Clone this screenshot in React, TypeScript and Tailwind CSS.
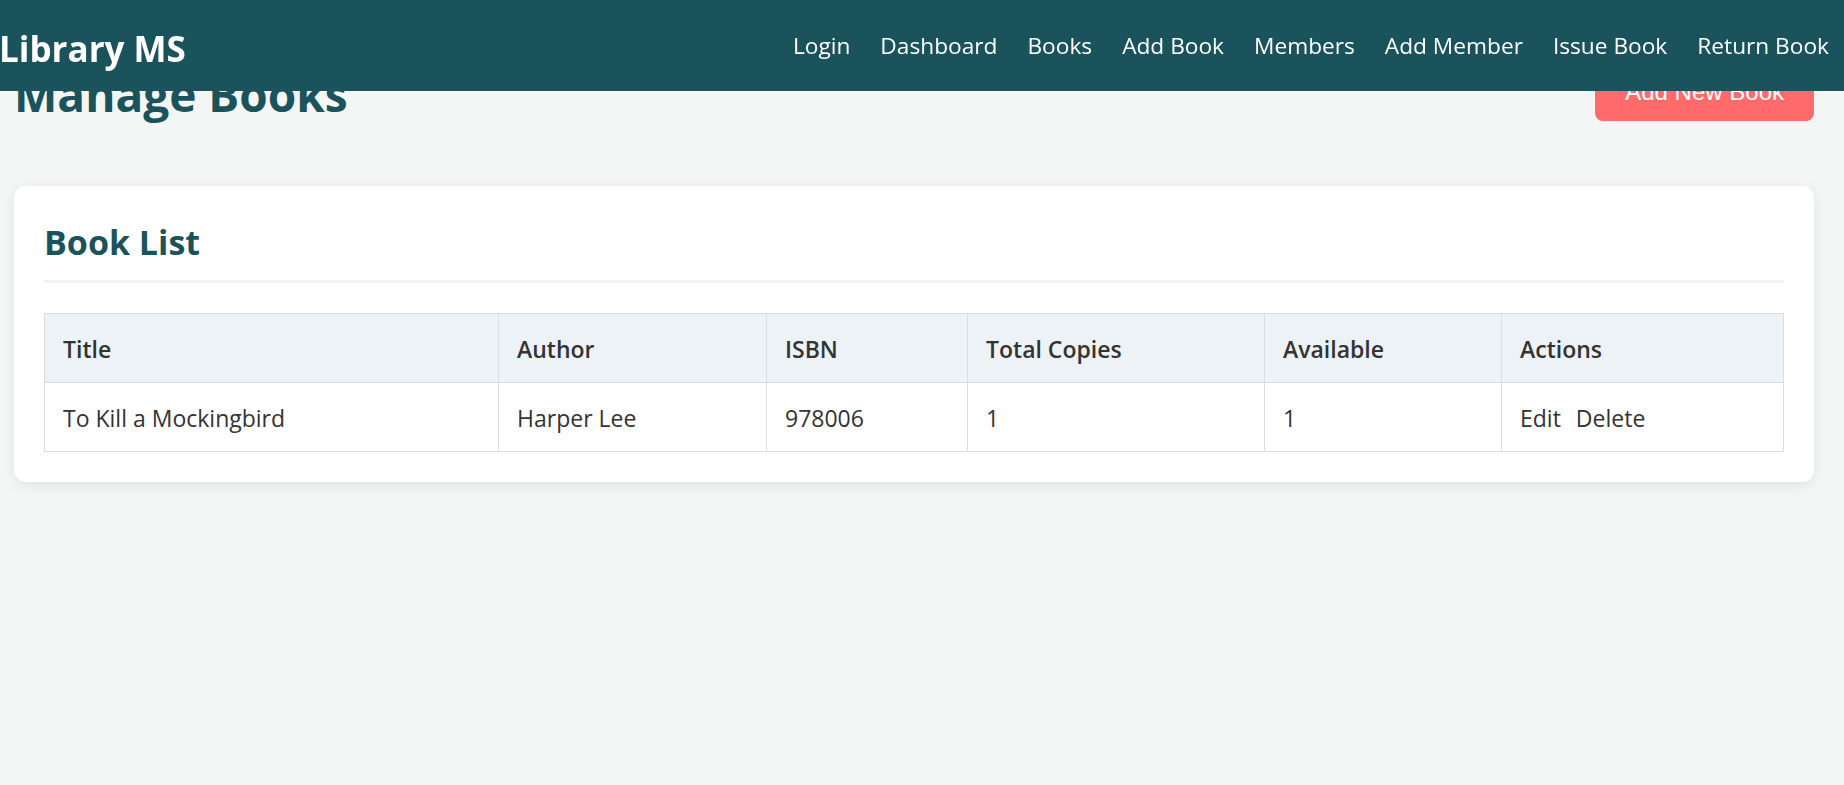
import React from "react";

const links = ["Login", "Dashboard", "Books", "Add Book", "Members", "Add Member", "Issue Book", "Return Book"];

const cols = [
  { name: "Title", w: "w-[454px]" },
  { name: "Author", w: "w-[268px]" },
  { name: "ISBN", w: "w-[201px]" },
  { name: "Total Copies", w: "w-[297px]" },
  { name: "Available", w: "w-[237px]" },
  { name: "Actions", w: "" },
];

export default function App() {
  return (
    <div
      className="min-h-[785px] bg-[#f4f6f6] text-[#333333]"
      style={{ fontFamily: '"Open Sans", "Noto Sans", sans-serif' }}
    >
      <nav className="fixed top-0 left-0 right-0 z-10 h-[91px] bg-[#1a535c] flex items-center justify-between pr-[15px]">
        <div className="text-white font-bold text-[35px] leading-[46px] mt-[6px] -ml-[1px]">Library MS</div>
        <ul className="flex items-center gap-[30px] text-white text-[22.7px] leading-[32px]">
          {links.map((l) => (
            <li key={l}>
              <a href="#" className="text-white">{l}</a>
            </li>
          ))}
        </ul>
      </nav>

      <main className="pt-[63px] pl-[14px] pr-[30px]">
        <div className="flex items-start justify-between">
          <h1 className="text-[#1a535c] font-bold text-[46px] leading-[61px] mt-[1px]">Manage Books</h1>
          <button
            className="bg-[#ff6b6b] text-white rounded-[8px] px-[30px] py-[15px] text-[24px] leading-[28px]"
            style={{ fontFamily: '"Liberation Sans", Arial, sans-serif' }}
          >
            Add New Book
          </button>
        </div>

        <section className="mt-[61px] bg-white rounded-[12px] shadow-[0_3px_14px_rgba(0,0,0,0.08)] p-[30px]">
          <h2 className="text-[#1a535c] font-bold text-[34px] leading-[52px] pb-[12px] border-b-[3px] border-[#f1f2f2]">
            Book List
          </h2>
          <table className="mt-[30px] w-full table-fixed border-collapse text-[23px] leading-[32px]">
            <thead>
              <tr className="bg-[#edf2f7]">
                {cols.map((c) => (
                  <th
                    key={c.name}
                    className={`${c.w} border border-[#dddddd] px-[18px] pt-[19px] pb-[17px] text-left font-semibold text-[#333333]`}
                  >
                    {c.name}
                  </th>
                ))}
              </tr>
            </thead>
            <tbody>
              <tr>
                <td className="border border-[#dddddd] px-[18px] pt-[19px] pb-[17px]">To Kill a Mockingbird</td>
                <td className="border border-[#dddddd] px-[18px] pt-[19px] pb-[17px]">Harper Lee</td>
                <td className="border border-[#dddddd] px-[18px] pt-[19px] pb-[17px]">978006</td>
                <td className="border border-[#dddddd] px-[18px] pt-[19px] pb-[17px]">1</td>
                <td className="border border-[#dddddd] px-[18px] pt-[19px] pb-[17px]">1</td>
                <td className="border border-[#dddddd] px-[18px] pt-[19px] pb-[17px]">
                  <a href="#" className="text-[#333333]">Edit</a>
                  <a href="#" className="text-[#333333] ml-[15px]">Delete</a>
                </td>
              </tr>
            </tbody>
          </table>
        </section>
      </main>
    </div>
  );
}
